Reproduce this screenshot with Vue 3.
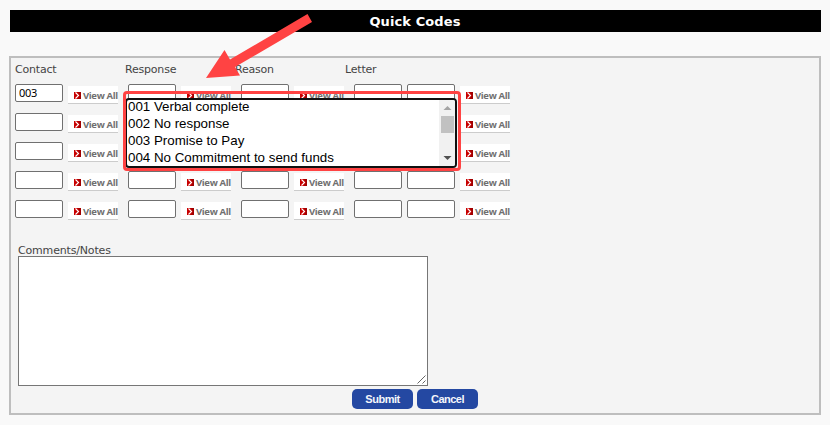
<script setup>
const headings = ['Contact', 'Response', 'Reason', 'Letter']
const rows = [
  ['003', '', '', ''],
  ['', '', '', ''],
  ['', '', '', ''],
  ['', '', '', ''],
  ['', '', '', '']
]
const options = ['001 Verbal complete', '002 No response', '003 Promise to Pay', '004 No Commitment to send funds']
</script>

<template>
  <main class="page">
    <h1 class="title"><span>Quick Codes</span></h1>
    <section class="panel">
      <div class="headings">
        <div v-for="h in headings" :key="h" class="heading"><span>{{ h }}</span></div>
      </div>
      <div class="rows">
        <div v-for="(row, r) in rows" :key="r" class="row">
          <template v-for="(code, c) in row" :key="c">
            <input class="code" type="text" :value="code" />
            <input v-if="c === 3" class="code" type="text" />
            <button class="view" type="button">
              <svg class="mark" width="8" height="7" viewBox="0 0 8 7">
                <rect width="7" height="7" fill="#c80000" />
                <path d="M4 0h3v7H4l2-3.500z" fill="#a00000" />
                <path d="M1.500.5l3 3-3 3" fill="none" stroke="#fff" stroke-width="1.100" />
              </svg>
              <span>View All</span>
            </button>
          </template>
        </div>
      </div>
      <label class="notes-label"><span>Comments/Notes</span></label>
      <div class="notes">
        <textarea></textarea>
        <svg class="grip" width="9" height="9" viewBox="0 0 9 9"><path d="M.5 8.500l8-8M5.500 8.500l3-3" stroke="#666" fill="none" /></svg>
      </div>
      <div class="actions">
        <button type="button">Submit</button>
        <button type="button">Cancel</button>
      </div>
    </section>

    <div class="list">
      <ul>
        <li v-for="o in options" :key="o">{{ o }}</li>
      </ul>
      <div class="bar">
        <svg width="15" height="66" viewBox="0 0 15 66">
          <path d="M4.500 10h8l-4-4z" fill="#a3a3a3" />
          <rect x="2" y="16" width="13" height="17" fill="#c1c1c1" />
          <path d="M4.500 56h8l-4 4z" fill="#505050" />
        </svg>
      </div>
    </div>
    <div class="highlight"></div>
    <svg class="arrow" width="110" height="70" viewBox="0 0 110 70">
      <path d="M0 68L18.500 40l5.500 9.500L101.500 4l4.500 8L29 57l5 8.500z" fill="#ff4343" />
    </svg>
  </main>
</template>

<style>
body { margin: 0; background: #f9f9f9; }
</style>

<style scoped>
* { box-sizing: border-box; }
.page {
  position: relative;
  height: 425px;
  padding: 10px 9px;
  overflow: hidden;
  background: #f9f9f9;
  font-family: "DejaVu Sans", Verdana, sans-serif;
  font-size: 11px;
  color: #444;
}
.title {
  margin: 0 0 24px 1px;
  padding: 1px 1px 0 0;
  height: 22px;
  line-height: 22px;
  background: #000;
  color: #fff;
  font-size: 13px;
  letter-spacing: 0.1px;
  font-weight: bold;
  text-align: center;
}
.panel {
  height: 359px;
  border: 2px solid #bebebe;
  background: #f4f4f4;
}
.headings { display: flex; padding-left: 4px; height: 26px; }
.heading { width: 110px; line-height: 24px; letter-spacing: -0.2px; }
.rows { padding-left: 4px; }
.row { display: flex; height: 29px; }
.code {
  width: 48px;
  height: 18px;
  margin: 0 5px 0 0;
  padding: 0 3px 1px;
  border: 1px solid #707070;
  border-radius: 2px;
  background: #fff;
  color: #000;
  font: 11px/15px "Noto Sans", sans-serif;
  letter-spacing: -0.3px;
}
.view {
  display: flex;
  align-items: center;
  width: 50px;
  height: 18px;
  margin: 2px 10px 0 0;
  padding: 2px 0 0 6px;
  border: 0;
  border-bottom: 1px solid #ccc;
  background: #fff;
  color: #707070;
  font: bold 9.500px/12px "Open Sans", sans-serif;
  letter-spacing: -0.35px;
  white-space: nowrap;
}
.mark { flex: none; margin-right: 1px; }
.notes-label { display: block; margin: 15px 0 0 7px; height: 12px; line-height: 14px; letter-spacing: -0.17px; }
.notes { position: relative; width: 410px; height: 130px; margin-left: 7px; }
textarea {
  display: block;
  width: 410px;
  height: 130px;
  border: 1px solid #767676;
  resize: none;
  background: #fff;
}
.grip { position: absolute; right: 2px; bottom: 2px; }
.actions { display: flex; gap: 4px; margin: 3px 0 0 341px; }
.actions button {
  width: 61px;
  height: 20px;
  padding: 0;
  border: 0;
  border-radius: 5px;
  background: #2448a2;
  color: #f4f6fb;
  font: bold 11px "Liberation Sans", Arial, sans-serif;
  letter-spacing: -0.5px;
}
.list {
  position: absolute;
  left: 125px;
  top: 98px;
  width: 332px;
  height: 70px;
  display: flex;
  border: 2px solid #101010;
  border-radius: 4px;
  background: #fff;
  overflow: hidden;
}
ul {
  flex: 1;
  margin: -2px 0 0;
  padding: 0 0 0 1px;
  list-style: none;
  color: #000;
  font: 13.333px/17px "Liberation Sans", Arial, sans-serif;
}
.bar { width: 16px; background: #f1f1f1; }
.bar svg { display: block; }
.highlight {
  position: absolute;
  left: 123px;
  top: 91px;
  width: 338px;
  height: 80px;
  border: 3px solid #ff4343;
  border-radius: 4px;
}
.arrow { position: absolute; left: 206px; top: 10px; }
</style>
